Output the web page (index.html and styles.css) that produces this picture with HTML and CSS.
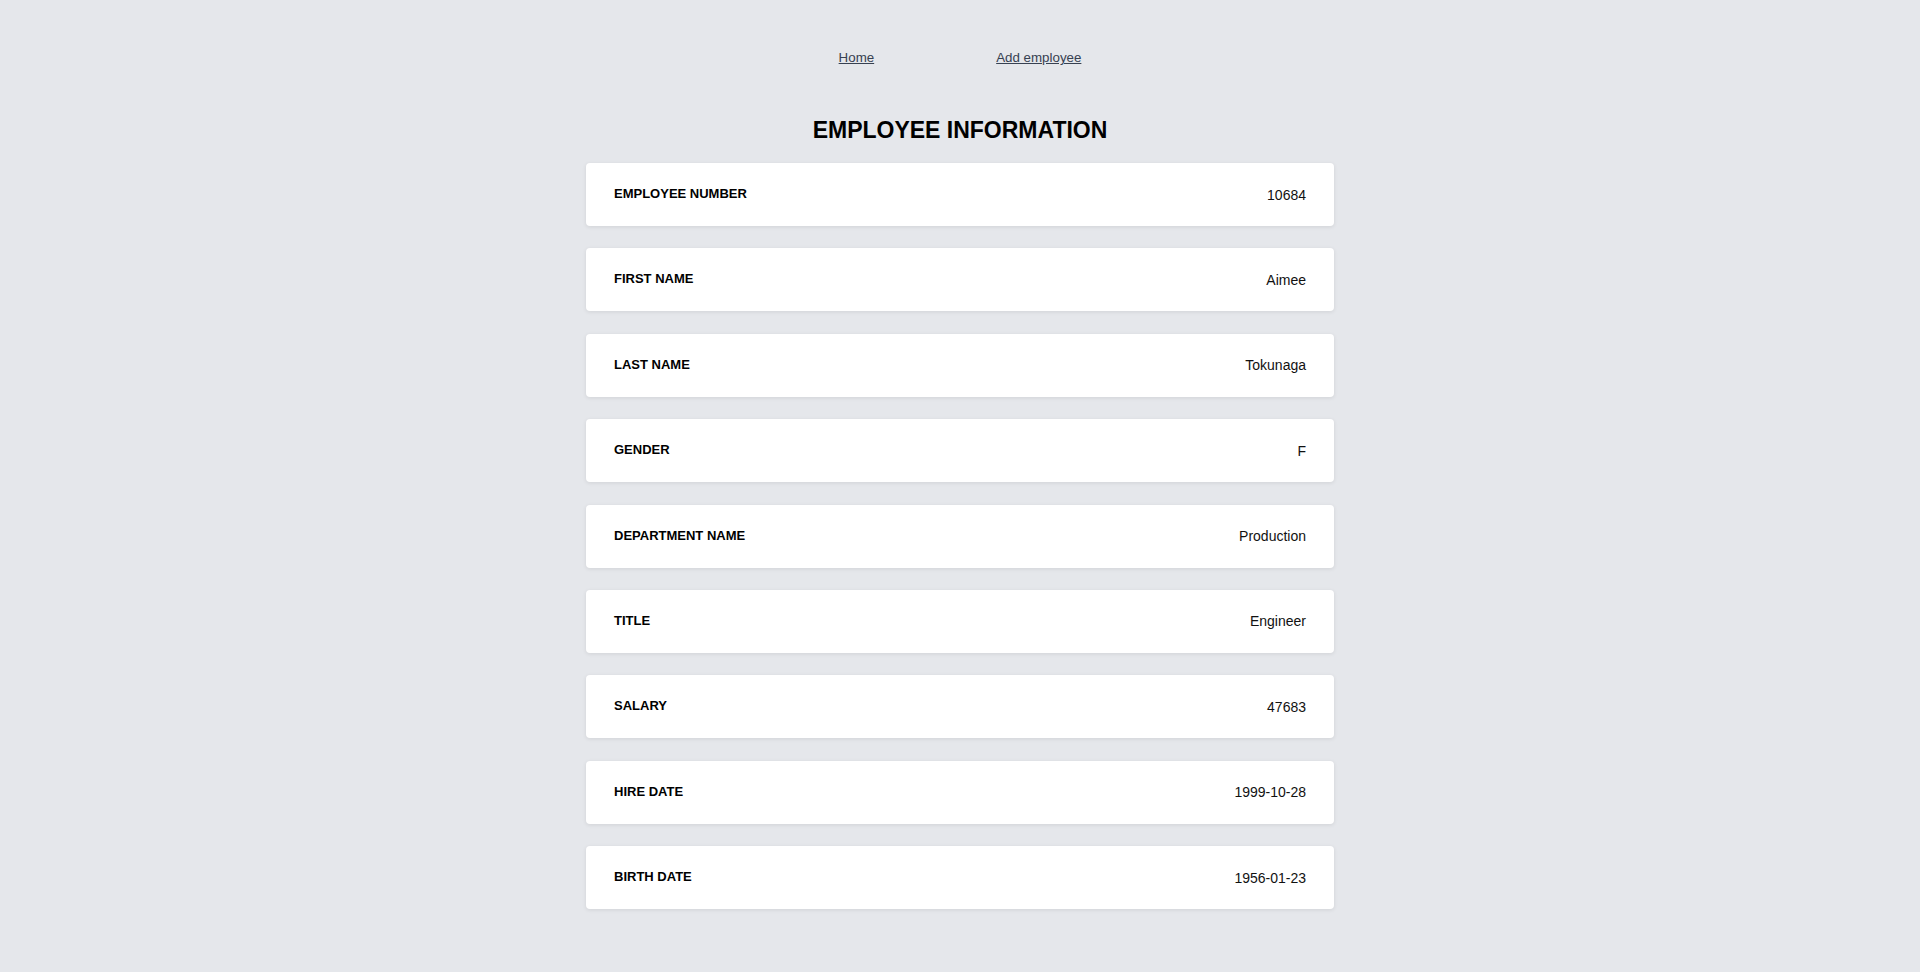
FILE: index.html
```html
<!DOCTYPE html>
<html lang="en">
<head>
<meta charset="utf-8">
<title>Employee Information</title>
<link rel="stylesheet" href="styles.css">
</head>
<body>
<nav class="nav">
  <a class="nav-link" href="#">Home</a>
  <a class="nav-link" href="#">Add employee</a>
</nav>
<main class="main">
  <h1 class="title">EMPLOYEE INFORMATION</h1>
  <div class="list">
    <div class="card"><span class="label">EMPLOYEE NUMBER</span><span class="value">10684</span></div>
    <div class="card"><span class="label">FIRST NAME</span><span class="value">Aimee</span></div>
    <div class="card"><span class="label">LAST NAME</span><span class="value">Tokunaga</span></div>
    <div class="card"><span class="label">GENDER</span><span class="value">F</span></div>
    <div class="card"><span class="label">DEPARTMENT NAME</span><span class="value">Production</span></div>
    <div class="card"><span class="label">TITLE</span><span class="value">Engineer</span></div>
    <div class="card"><span class="label">SALARY</span><span class="value">47683</span></div>
    <div class="card"><span class="label">HIRE DATE</span><span class="value">1999-10-28</span></div>
    <div class="card"><span class="label">BIRTH DATE</span><span class="value">1956-01-23</span></div>
  </div>
</main>
</body>
</html>
```
FILE: styles.css
```css
html, body {
  margin: 0;
  padding: 0;
}
body {
  background: #e5e7eb;
  font-family: "Liberation Sans", Arial, sans-serif;
  color: #111;
  min-height: 972px;
}
.nav {
  display: flex;
  justify-content: center;
  gap: 122px;
  padding-top: 50px;
  line-height: 15px;
}
.nav-link {
  font-size: 13.33px;
  color: #374151;
  text-decoration: underline;
}
.main {
  display: flex;
  flex-direction: column;
  align-items: center;
}
.title {
  margin: 52px 0 19px;
  font-size: 23px;
  font-weight: bold;
  line-height: 27px;
  color: #000;
}
.list {
  width: 748px;
  display: flex;
  flex-direction: column;
  gap: 22.4px;
}
.card {
  height: 63px;
  box-sizing: border-box;
  padding: 0 28px;
  background: #fff;
  border-radius: 4px;
  box-shadow: 0 1px 4px rgba(0, 0, 0, 0.09);
  display: flex;
  align-items: center;
  justify-content: space-between;
}
.label {
  font-size: 13px;
  font-weight: bold;
  color: #000;
  margin-bottom: 2px;
}
.value {
  font-size: 14px;
  color: #111;
}
```
